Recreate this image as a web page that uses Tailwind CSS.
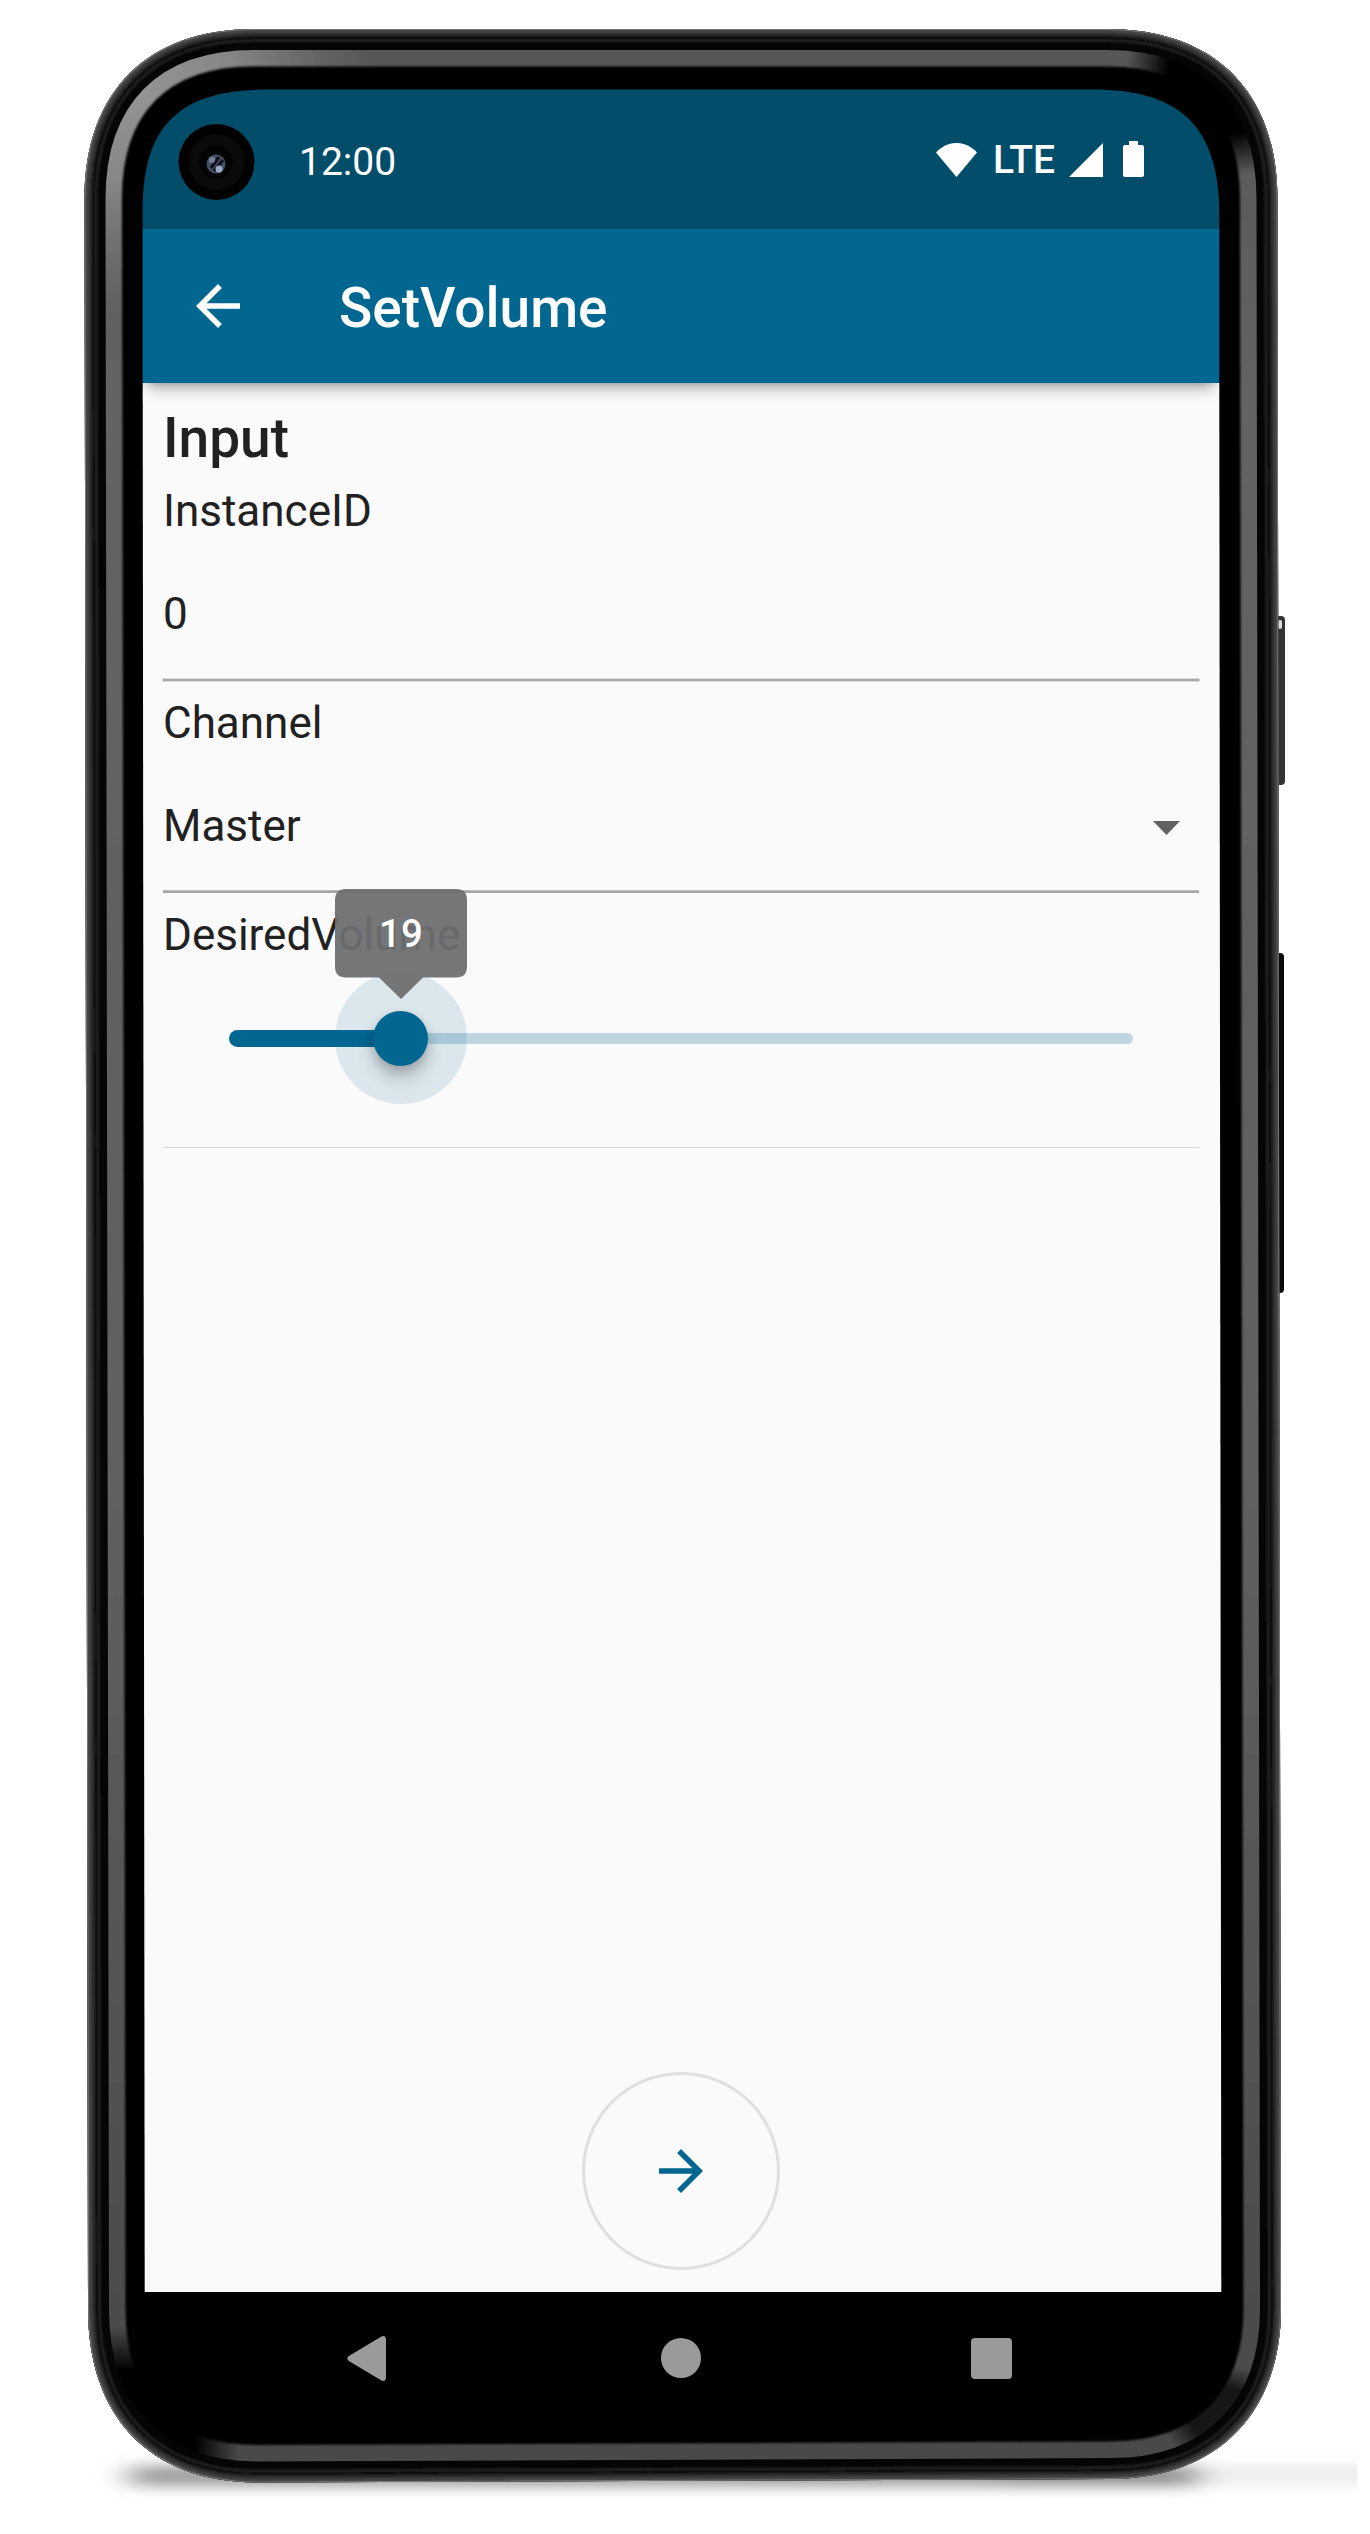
<!DOCTYPE html>
<html lang="en">
<head>
<meta charset="utf-8">
<title>SetVolume</title>
<script src="https://cdn.jsdelivr.net/npm/@tailwindcss/browser@4"></script>
</head>
<body class="bg-white">
<main class="relative w-[1370px] h-[2534px] overflow-hidden font-['Roboto',sans-serif] text-[#212121]">

  <!-- Device frame -->
  <svg class="absolute inset-0" width="1370" height="2534" viewBox="0 0 1370 2534" fill="none" aria-hidden="true">
    <defs>
      <path id="body" d="M254 29H1107C1215 29 1277.500 92 1277.500 199L1281 2309C1281 2412 1218 2479 1111 2479L258 2482.500C150 2482.500 88 2417 88 2309L84.500 199C84.500 92 147 29 254 29Z"/>
      <clipPath id="bodyClip"><use href="#body"/></clipPath>
      <linearGradient id="gloss" x1="0" y1="0" x2="0" y2="1"><stop offset="0" stop-color="#565656"/><stop offset=".15" stop-color="#636363"/><stop offset=".6" stop-color="#606060"/><stop offset="1" stop-color="#484848"/></linearGradient>
      <radialGradient id="shine" gradientUnits="userSpaceOnUse" cx="145" cy="95" r="230"><stop offset="0" stop-color="#949494"/><stop offset=".4" stop-color="#8c8c8c" stop-opacity=".9"/><stop offset="1" stop-color="#777" stop-opacity="0"/></radialGradient>
      <radialGradient id="fade"><stop offset="0"/><stop offset=".55"/><stop offset="1" stop-opacity="0"/></radialGradient>
      <filter id="blur8" x="-10%" y="-300%" width="120%" height="700%"><feGaussianBlur stdDeviation="16 7"/></filter>
      <filter id="blur1" x="-10%" y="-10%" width="120%" height="120%"><feGaussianBlur stdDeviation="1"/></filter>
      <clipPath id="shadowClip"><rect width="1357" height="2534"/></clipPath>
    </defs>
    <g clip-path="url(#shadowClip)">
      <rect x="128" y="2466" width="1070" height="20" rx="10" fill="#000" fill-opacity=".4" filter="url(#blur8)"/>
      <rect x="1000" y="2466" width="440" height="18" rx="9" fill="#000" fill-opacity=".08" filter="url(#blur8)"/>
    </g>
    <rect x="1274" y="616" width="11" height="169" rx="4" fill="#333"/>
    <rect x="1278" y="620" width="4" height="9" rx="2" fill="#ddd"/>
    <rect x="1273" y="953" width="11" height="340" rx="4" fill="#080808"/>
    <g clip-path="url(#bodyClip)">
      <use href="#body" fill="#000"/>
      <g filter="url(#blur1)">
        <use href="#body" stroke="url(#gloss)" stroke-width="75"/>
        <use href="#body" stroke="url(#shine)" stroke-width="74"/>
      </g>
      <ellipse cx="1218" cy="84" rx="100" ry="80" fill="url(#fade)" transform="rotate(45 1218 84)"/>
      <ellipse cx="142" cy="2424" rx="112" ry="80" fill="url(#fade)" transform="rotate(45 142 2424)"/>
      <ellipse cx="1222" cy="2415" rx="60" ry="50" fill="url(#fade)" fill-opacity=".7"/>
      <path d="M170 135V2400H1190V135Z" fill="#000"/>
      <use href="#body" stroke="#050505" stroke-width="42"/>
      <g filter="url(#blur1)">
        <use href="#body" stroke="#222" stroke-width="26"/>
        <use href="#body" stroke="#050505" stroke-width="20"/>
        <use href="#body" stroke="#2c2c2c" stroke-width="15"/>
        <use href="#body" stroke="#444" stroke-width="8"/>
      </g>
      <use href="#body" stroke="#777" stroke-width="2"/>
    </g>
    <path d="M142.600 229V210C142.600 118 187 89.500 270 89.500H1092C1176 89.500 1219.300 122 1219.300 215V229Z" fill="#014d6a"/>
    <path d="M142.600 229H1219.300V383H142.600Z" fill="#016690"/>
    <path d="M142.700 383H1219.300L1221.300 2292H144.700Z" fill="#fafafa"/>
    <g>
      <circle cx="216.500" cy="162" r="38" fill="#000"/>
      <circle cx="216.500" cy="162" r="28" fill="#0a0a0a"/>
      <circle cx="216" cy="162" r="17" fill="#040404"/>
      <circle cx="216" cy="164" r="9.500" fill="#465065"/>
      <path d="M211 168l8-11M214 171l9-11" stroke="#0d1018" stroke-width="3"/>
      <circle cx="212" cy="160" r="3" fill="#73819c"/>
      <circle cx="219" cy="169" r="3.500" fill="#9aaac8"/>
    </g>
  </svg>

  <div class="relative ml-[143px] w-[1076px] pt-[89px] h-[2444px] flex flex-col">
    <!-- Status bar -->
    <header class="h-[140px] shrink-0 flex items-center justify-between pl-[156px] pr-[75px] text-white">
      <span class="text-[39px] leading-[46px] mt-[5px]">12:00</span>
      <div class="flex items-center">
        <svg class="mr-[16px] mt-[1px]" width="41" height="34" viewBox="0 0 41 34" fill="#fff"><path d="M20.500 34L0 9.500C12-3.200 29-3.200 41 9.500Z"/></svg>
        <span class="w-[65px] text-[39px] leading-[46px] mt-px font-medium">LTE</span>
        <svg class="ml-[11px] mt-[2px]" width="34" height="34" viewBox="0 0 34 34" fill="#fff"><path d="M34 0V34H0Z"/></svg>
        <svg class="ml-[20px]" width="21" height="36" viewBox="0 0 21 36" fill="#fff"><path d="M6 0h9v4h4q2 0 2 2v28q0 2-2 2H2q-2 0-2-2V6q0-2 2-2h4z"/></svg>
      </div>
    </header>

    <!-- App bar -->
    <nav class="h-[154px] shrink-0 bg-[#016690] flex items-center pl-[42px] text-white shadow-[0_11px_14px_-6px_rgba(0,0,0,.32),0_3px_6px_-2px_rgba(0,0,0,.12)]">
      <svg width="66" height="66" viewBox="0 0 24 24" fill="#fff"><path d="M20 11H7.830l5.590-5.590L12 4l-8 8 8 8 1.410-1.410L7.830 13H20v-2z"/></svg>
      <h1 class="ml-[88px] mt-[4px] text-[55px] leading-[64px] font-medium">SetVolume</h1>
    </nav>

    <section class="flex flex-col px-5 pt-[23px] text-[44px] leading-[52px]">
      <h2 class="text-[55px] leading-[64px] font-medium">Input</h2>
      <label class="mt-[15px]">InstanceID</label>
      <div class="mt-[51px]">0</div>
      <div class="mt-[39px] h-[2px] bg-[#a6a6a6] shadow-[0_0_0_1px_#dcdcdc]"></div>
      <label class="mt-[16px]">Channel</label>
      <div class="mt-[51px] flex items-center justify-between">
        <span>Master</span>
        <svg class="mr-[19px] mt-[3px]" width="27" height="14" viewBox="0 0 27 14" fill="#616161"><path d="M0 0h27L13.500 14z"/></svg>
      </div>
      <div class="mt-[39px] h-[2px] bg-[#a6a6a6] shadow-[0_-1px_0_#bcbcbc]"></div>
      <label class="mt-[16px]">DesiredVolume</label>
      <!-- Slider -->
      <div class="relative h-[187px] border-b border-[#dadada]">
        <div class="absolute left-[237px] top-[71.500px] w-[733px] h-[11px] rounded-r-full bg-[#bfd6e0]"></div>
        <div class="absolute left-[172px] top-[11px] size-[132px] rounded-full bg-[#016690]/12"></div>
        <div class="absolute left-[66px] top-[69px] w-[171px] h-[17px] rounded-l-full bg-[#016690]"></div>
        <div class="absolute left-[210px] top-[49.500px] size-[55px] rounded-full bg-[#016690] shadow-[0_12px_18px_rgba(0,0,0,.2),0_4px_10px_rgba(0,0,0,.14)]"></div>
        <div class="absolute left-[172px] top-[-72px] w-[132px] h-[110px] text-center">
          <svg class="absolute inset-0" width="132" height="110" viewBox="0 0 132 110" fill="#6c6d6f" fill-opacity=".94"><path d="M11 0H121Q132 0 132 11V77.500Q132 88.500 121 88.500H88L66 110L44 88.500H11Q0 88.500 0 77.500V11Q0 0 11 0Z"/></svg>
          <span class="relative block pt-[22px] text-[38.500px] leading-[46px] font-medium text-white">19</span>
        </div>
      </div>
    </section>

    <button class="mt-auto mb-[22px] self-center size-[198px] shrink-0 rounded-full border-[3px] border-[#dfdfdf] flex items-center justify-center">
      <svg width="66" height="66" viewBox="0 0 24 24" fill="#016690"><path d="M12 4l-1.410 1.410L16.170 11H4v2h12.170l-5.580 5.590L12 20l8-8z"/></svg>
    </button>

    <!-- System navigation -->
    <footer class="h-[152px] shrink-0 flex items-start pt-[44px] pl-[204px]">
      <svg width="39" height="45" viewBox="0 0 39 45" fill="#9a9a9a"><path d="M34 .700Q39-1.500 39 4V41Q39 46.500 34 44.300L1.800 25Q-1.200 22.500 1.800 20Z"/></svg>
      <div class="ml-[275px] mt-[2px] size-10 rounded-full bg-[#9a9a9a]"></div>
      <div class="ml-[270px] mt-[2px] size-[41px] rounded-[4px] bg-[#9a9a9a]"></div>
    </footer>
  </div>
</main>
</body>
</html>
